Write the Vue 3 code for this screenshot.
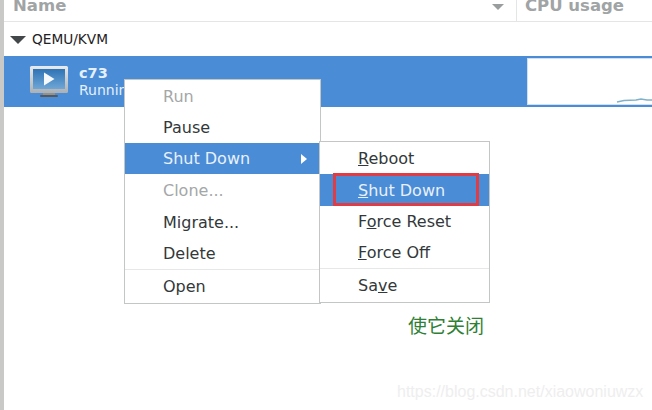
<script setup>
const menu = [
  { label: "Run", disabled: true },
  { label: "Pause" },
  { label: "Shut Down", active: true, arrow: true },
  { label: "Clone...", disabled: true },
  { label: "Migrate..." },
  { label: "Delete" },
  { sep: true },
  { label: "Open" },
];

const submenu = [
  { before: "", key: "R", after: "eboot" },
  { before: "", key: "S", after: "hut Down", active: true },
  { before: "F", key: "o", after: "rce Reset" },
  { before: "", key: "F", after: "orce Off" },
  { sep: true },
  { before: "Sa", key: "v", after: "e" },
];
</script>

<template>
  <div class="page">
    <div class="header">
      <div class="col-name">
        <span>Name</span>
        <span class="sort"></span>
      </div>
      <div class="col-cpu">CPU usage</div>
    </div>

    <div class="group">
      <span class="expander"></span>
      <span>QEMU/KVM</span>
    </div>

    <div class="vm-row">
      <svg class="vm-icon" width="40" height="32" viewBox="0 0 40 32">
        <defs>
          <linearGradient id="screen" x1="0" y1="0" x2="0" y2="1">
            <stop offset="0" stop-color="#2f74b5" />
            <stop offset="1" stop-color="#6fa6d6" />
          </linearGradient>
          <linearGradient id="frame" x1="0" y1="0" x2="0" y2="1">
            <stop offset="0" stop-color="#e8ebed" />
            <stop offset="1" stop-color="#aab0b4" />
          </linearGradient>
        </defs>
        <rect x="1" y="0" width="38" height="27" rx="1.5" fill="url(#frame)" />
        <rect x="4" y="3" width="32" height="20" fill="url(#screen)" />
        <path d="M15 6.5 L25.5 13 L15 19.5 Z" fill="#f6f9fc" />
        <rect x="14" y="27" width="12" height="2" fill="#8d9296" />
        <rect x="11" y="29" width="18" height="2" rx="1" fill="#55595c" />
      </svg>
      <div class="vm-text">
        <div class="vm-name">c73</div>
        <div class="vm-state">Running</div>
      </div>
      <div class="graph">
        <svg width="124" height="45" viewBox="0 0 124 45">
          <path d="M89 43 L96 41.5 L108 41 L113 40 L119 41 L125 41" fill="none" stroke="#7fb2c9" stroke-width="1.5" />
        </svg>
      </div>
    </div>

    <div class="note">使它关闭</div>
    <div class="watermark">https://blog.csdn.net/xiaowoniuwzx</div>

    <ul class="menu main-menu">
      <template v-for="(item, i) in menu" :key="i">
        <li v-if="item.sep" class="sep"></li>
        <li v-else class="item" :class="{ disabled: item.disabled, active: item.active }">
          <span>{{ item.label }}</span>
          <span v-if="item.arrow" class="arrow"></span>
        </li>
      </template>
    </ul>

    <ul class="menu sub-menu">
      <template v-for="(item, i) in submenu" :key="i">
        <li v-if="item.sep" class="sep"></li>
        <li v-else class="item" :class="{ active: item.active }">
          <span>{{ item.before }}<u>{{ item.key }}</u>{{ item.after }}</span>
        </li>
      </template>
    </ul>

    <div class="red-box"></div>
  </div>
</template>

<style scoped>
.page {
  position: relative;
  width: 652px;
  height: 410px;
  overflow: hidden;
  background: #fff;
  border-left: 4px solid #c9c9c7;
  box-sizing: border-box;
  font-family: "DejaVu Sans", sans-serif;
  font-size: 16px;
  color: #2e3436;
}

.header {
  display: flex;
  height: 22px;
  box-sizing: border-box;
  border-bottom: 1px solid #e4e6e6;
  color: #a0a4a5;
  font-weight: bold;
  font-size: 16.5px;
  line-height: 12px;
}

.col-name {
  display: flex;
  justify-content: space-between;
  width: 513px;
  padding: 0 12px 0 9px;
  box-sizing: border-box;
  border-right: 1px solid #e4e6e6;
}

.sort {
  width: 0;
  height: 0;
  margin-top: 4px;
  border-left: 6px solid transparent;
  border-right: 6px solid transparent;
  border-top: 6px solid #9a9d9e;
}

.col-cpu {
  padding-left: 8px;
}

.group {
  display: flex;
  align-items: center;
  gap: 6px;
  height: 34px;
  padding-left: 6px;
  font-size: 13.7px;
  color: #1e2224;
}

.expander {
  width: 0;
  height: 0;
  border-left: 8.5px solid transparent;
  border-right: 8.5px solid transparent;
  border-top: 8px solid #444749;
  margin-top: 1px;
}

.vm-row {
  display: flex;
  align-items: center;
  height: 51px;
  background: #4a8cd6;
  color: #fff;
  padding-left: 25px;
  box-sizing: border-box;
  position: relative;
}

.vm-icon {
  flex: none;
}

.vm-text {
  margin-left: 10px;
  flex: 1;
  line-height: 17px;
  font-size: 14px;
  color: #e6f0fa;
}

.vm-name {
  font-weight: bold;
  font-size: 14.5px;
}

.graph {
  flex: none;
  width: 125px;
  height: 47px;
  background: #fff;
  border: 1px solid #cfe0f2;
  border-right: none;
  box-sizing: border-box;
}

.graph svg {
  display: block;
}

.note {
  position: absolute;
  left: 404px;
  top: 315px;
  font-family: "Noto Sans CJK SC", sans-serif;
  font-size: 19px;
  line-height: 20px;
  color: #2f7f35;
}

.watermark {
  position: absolute;
  left: 393px;
  top: 383px;
  font-family: "Liberation Sans", sans-serif;
  font-size: 16px;
  line-height: 18px;
  color: #eeeeee;
}

.menu {
  position: absolute;
  margin: 0;
  padding: 1px 0;
  list-style: none;
  background: #fff;
  border: 1px solid #c4c6c6;
  box-sizing: border-box;
}

.main-menu {
  left: 120px;
  top: 79px;
  width: 197px;
  height: 225px;
}

.sub-menu {
  left: 315px;
  top: 141px;
  width: 171px;
  height: 162px;
}

.item {
  display: flex;
  align-items: center;
  justify-content: space-between;
  height: 31px;
  padding: 0 13px 0 38px;
  color: #33383a;
}

.item.disabled {
  color: #a4a7a8;
}

.main-menu .item.disabled:not(:first-child) {
  height: 33px;
}

.sub-menu .item.active {
  height: 32px;
}

.item.active {
  background: #4a8cd6;
  color: #e8f1fb;
}

.arrow {
  width: 0;
  height: 0;
  border-top: 5px solid transparent;
  border-bottom: 5px solid transparent;
  border-left: 6px solid #fff;
}

.sep {
  height: 1px;
  margin-bottom: 1px;
  background: #e6e7e7;
}

.red-box {
  position: absolute;
  left: 329px;
  top: 173px;
  width: 146px;
  height: 33px;
  box-sizing: border-box;
  border: 3px solid #e03c45;
}
</style>
